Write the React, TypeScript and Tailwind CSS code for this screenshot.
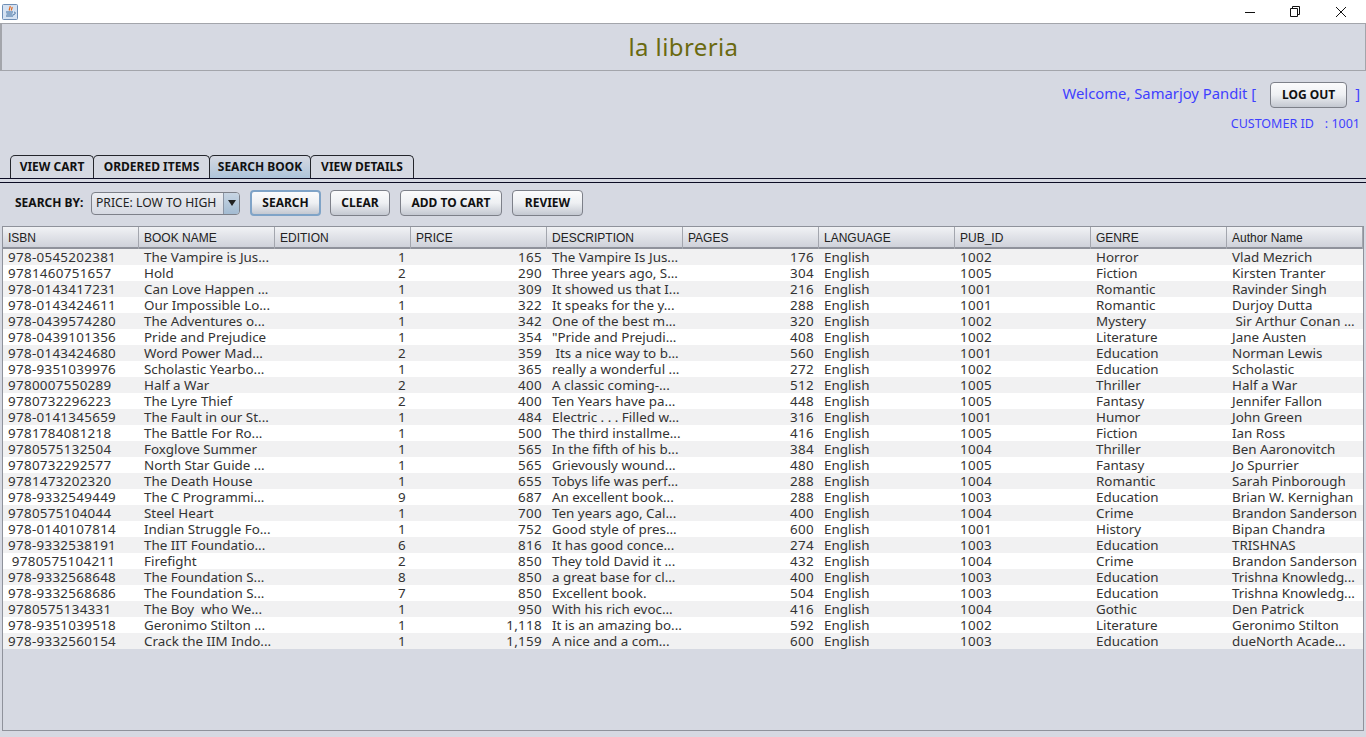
const rows: string[][] = [
["978-0545202381","The Vampire is Jus...","1","165","The Vampire Is Jus...","176","English","1002","Horror","Vlad Mezrich"],
["9781460751657","Hold","2","290","Three years ago, S...","304","English","1005","Fiction","Kirsten Tranter"],
["978-0143417231","Can Love Happen ...","1","309","It showed us that I...","216","English","1001","Romantic","Ravinder Singh"],
["978-0143424611","Our Impossible Lo...","1","322","It speaks for the y...","288","English","1001","Romantic","Durjoy Dutta"],
["978-0439574280","The Adventures o...","1","342","One of the best m...","320","English","1002","Mystery"," Sir Arthur Conan ..."],
["978-0439101356","Pride and Prejudice","1","354","\"Pride and Prejudi...","408","English","1002","Literature","Jane Austen"],
["978-0143424680","Word Power Mad...","2","359"," Its a nice way to b...","560","English","1001","Education","Norman Lewis"],
["978-9351039976","Scholastic Yearbo...","1","365","really a wonderful ...","272","English","1002","Education","Scholastic"],
["9780007550289","Half a War","2","400","A classic coming-...","512","English","1005","Thriller","Half a War"],
["9780732296223","The Lyre Thief","2","400","Ten Years have pa...","448","English","1005","Fantasy","Jennifer Fallon"],
["978-0141345659","The Fault in our St...","1","484","Electric . . . Filled w...","316","English","1001","Humor","John Green"],
["9781784081218","The Battle For Ro...","1","500","The third installme...","416","English","1005","Fiction","Ian Ross"],
["9780575132504","Foxglove Summer","1","565","In the fifth of his b...","384","English","1004","Thriller","Ben Aaronovitch"],
["9780732292577","North Star Guide ...","1","565","Grievously wound...","480","English","1005","Fantasy","Jo Spurrier"],
["9781473202320","The Death House","1","655","Tobys life was perf...","288","English","1004","Romantic","Sarah Pinborough"],
["978-9332549449","The C Programmi...","9","687","An excellent book...","288","English","1003","Education","Brian W. Kernighan"],
["9780575104044","Steel Heart","1","700","Ten years ago, Cal...","400","English","1004","Crime","Brandon Sanderson"],
["978-0140107814","Indian Struggle Fo...","1","752","Good style of pres...","600","English","1001","History","Bipan Chandra"],
["978-9332538191","The IIT Foundatio...","6","816","It has good conce...","274","English","1003","Education","TRISHNAS"],
[" 9780575104211","Firefight","2","850","They told David it ...","432","English","1004","Crime","Brandon Sanderson"],
["978-9332568648","The Foundation S...","8","850","a great base for cl...","400","English","1003","Education","Trishna Knowledg..."],
["978-9332568686","The Foundation S...","7","850","Excellent book.","504","English","1003","Education","Trishna Knowledg..."],
["9780575134331","The Boy  who We...","1","950","With his rich evoc...","416","English","1004","Gothic","Den Patrick"],
["978-9351039518","Geronimo Stilton ...","1","1,118","It is an amazing bo...","592","English","1002","Literature","Geronimo Stilton"],
["978-9332560154","Crack the IIM Indo...","1","1,159","A nice and a com...","600","English","1003","Education","dueNorth Acade..."],
];
const headers = ["ISBN","BOOK NAME","EDITION","PRICE","DESCRIPTION","PAGES","LANGUAGE","PUB_ID","GENRE","Author Name"];
const rightAligned = new Set([2,3,5]);
const numeric = new Set([0,2,3,5,7]);
const bold = "font-['Noto_Sans',sans-serif] font-bold text-[12px] text-[#111]";
const btn = "h-[26px] rounded-[4px] border border-[#7d8089] bg-gradient-to-b from-[#fbfbfc] via-[#eef0f3] to-[#c4c8d1] flex items-center justify-center " + bold;
const tabs = [["VIEW CART",84,false],["ORDERED ITEMS",117,false],["SEARCH BOOK",102,true],["VIEW DETAILS",104,false]] as const;

export default function App() {
  return (
    <div className="w-[1366px] h-[737px] overflow-hidden bg-[#d6d9e2] flex flex-col font-['Liberation_Sans',sans-serif]">
      <div className="h-[23px] bg-white flex items-center shrink-0">
        <svg width="16" height="16" viewBox="0 0 16 16" className="ml-[2px]">
          <rect x="0.5" y="0.5" width="15" height="15" rx="1" fill="#d5e2f2" stroke="#6e8eb5" />
          <path d="M8 2c1 1.500-1.500 2.500-.5 4.500M10 3c.5 1.500-1 2-.5 3.500" stroke="#e2661a" strokeWidth="1.2" fill="none" />
          <path d="M4 8h7M4.500 10h6M4 12h7M12 8c2 0 1.500 2.500-1 3" stroke="#3d6c9e" strokeWidth="1" fill="none" />
        </svg>
        <div className="ml-auto flex items-center">
          <svg width="45" height="20" viewBox="0 0 45 20"><path d="M0 10.500h10" stroke="#111" /></svg>
          <svg width="46" height="20" viewBox="0 0 46 20"><path d="M0.500 6.500h7v8h-7zM2.500 6.500v-2h7v8h-2" stroke="#111" fill="none" /></svg>
          <svg width="30" height="20" viewBox="0 0 30 20"><path d="M0 5l10 10M10 5L0 15" stroke="#111" fill="none" /></svg>
        </div>
      </div>

      <div className="h-[48px] shrink-0 border border-l-2 border-[#a3a5ab] flex items-center justify-center text-[24px] text-[#6b6a10] font-['Noto_Sans',sans-serif] tracking-[0.4px]">
        la libreria
      </div>

      <div className="h-[84px] shrink-0 flex flex-col items-end pr-[6px] text-[#3f3fff] font-['Noto_Sans',sans-serif]">
        <div className="mt-[11px] h-[26px] flex items-center text-[14.800px]">
          <span className="relative top-[-2px]">Welcome, Samarjoy Pandit [</span>
          <div className={btn + " w-[77px] ml-[14px] mr-[8px]"}>LOG OUT</div>
          <span className="relative top-[-2px]">]</span>
        </div>
        <div className="mt-[8px] text-[12.500px] leading-[16px] flex">
          <span>CUSTOMER ID</span><span className="ml-[11px]">: 1001</span>
        </div>
      </div>

      <div className="h-[23px] shrink-0 flex items-stretch pl-[10px]">
        {tabs.map(([label, w, active]) => (
          <div key={label} style={{ width: w }} className={"ml-[-1px] first:ml-0 rounded-t-[5px] border border-b-0 border-[#24262c] flex items-center justify-center " + bold + (active ? " bg-gradient-to-b from-[#d6d9e2] to-[#aec4da]" : " bg-[#d6d9e2]")}>
            {label}
          </div>
        ))}
      </div>
      <div className="h-[5px] shrink-0 border-y border-y-[#0c0c24]" />

      <div className="h-[26px] mt-[7px] shrink-0 flex items-center pl-[15px]">
        <span className={bold + " w-[76px]"}>SEARCH BY:</span>
        <div className="w-[149px] h-[23px] rounded-[4px] border border-[#7d8089] flex bg-gradient-to-b from-[#eceef2] to-[#d6d9e2] overflow-hidden">
          <span className="flex-1 pl-[4px] text-[12.200px] leading-[20px] text-[#222] font-['Noto_Sans',sans-serif]">PRICE: LOW TO HIGH</span>
          <span className="w-[16px] border-l border-[#8b95a5] bg-gradient-to-b from-[#c8d5e3] to-[#a3bbd2] flex items-center justify-center">
            <svg width="8" height="6" viewBox="0 0 8 6"><path d="M0 0h8L4 6z" fill="#222" /></svg>
          </span>
        </div>
        <div className={btn + " w-[71px] ml-[10px] border-2 border-[#7fa3c7]"}>SEARCH</div>
        <div className={btn + " w-[60px] ml-[9px]"}>CLEAR</div>
        <div className={btn + " w-[102px] ml-[10px]"}>ADD TO CART</div>
        <div className={btn + " w-[71px] ml-[10px]"}>REVIEW</div>
      </div>

      <div className="mt-[10px] ml-[2px] w-[1362px] h-[505px] shrink-0 border border-[#8f929b] flex flex-col">
        <div className="grid grid-cols-[repeat(10,136px)] h-[22px] border-b-2 border-[#8f929b] bg-gradient-to-b from-[#f1f2f5] to-[#cfd2da]">
          {headers.map((h) => (
            <div key={h} className="border-r border-[#a3a6ae] pl-[5px] text-[12px] leading-[22px] text-[#222]">{h}</div>
          ))}
        </div>
        <div className="flex flex-col font-['Noto_Sans',sans-serif] text-[13.400px] text-[#333]">
          {rows.map((r, i) => (
            <div key={i} className={"grid grid-cols-[repeat(10,136px)] h-[16px] leading-[17px] " + (i % 2 === 0 ? "bg-[#f1f1f2]" : "bg-white")}>
              {r.map((c, j) => (
                <div key={j} className={"whitespace-pre px-[5px] " + (rightAligned.has(j) ? "text-right " : "") + (numeric.has(j) ? "tracking-[0.3px]" : "")}>{c}</div>
              ))}
            </div>
          ))}
        </div>
      </div>
    </div>
  );
}
